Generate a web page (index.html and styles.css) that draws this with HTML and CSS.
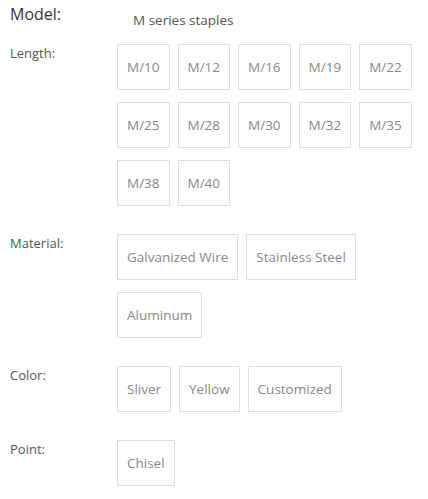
FILE: index.html
```html
<!DOCTYPE html>
<html lang="en">
<head>
<meta charset="utf-8">
<title>Product specs</title>
<link rel="stylesheet" href="styles.css">
</head>
<body>
<div class="specs">
  <div class="row row-model">
    <div class="label label-model">Model:</div>
    <div class="value-text">M series staples</div>
  </div>
  <div class="row">
    <div class="label">Length:</div>
    <div class="options">
      <span class="opt">M/10</span>
      <span class="opt">M/12</span>
      <span class="opt">M/16</span>
      <span class="opt">M/19</span>
      <span class="opt">M/22</span>
      <span class="opt">M/25</span>
      <span class="opt">M/28</span>
      <span class="opt">M/30</span>
      <span class="opt">M/32</span>
      <span class="opt">M/35</span>
      <span class="opt">M/38</span>
      <span class="opt">M/40</span>
    </div>
  </div>
  <div class="row">
    <div class="label">Material:</div>
    <div class="options">
      <span class="opt">Galvanized Wire</span>
      <span class="opt">Stainless Steel</span>
      <span class="opt">Aluminum</span>
    </div>
  </div>
  <div class="row">
    <div class="label">Color:</div>
    <div class="options">
      <span class="opt">Sliver</span>
      <span class="opt">Yellow</span>
      <span class="opt">Customized</span>
    </div>
  </div>
  <div class="row">
    <div class="label">Point:</div>
    <div class="options">
      <span class="opt">Chisel</span>
    </div>
  </div>
</div>
</body>
</html>
```

FILE: styles.css
```css
html, body {
  margin: 0;
  padding: 0;
  background: #ffffff;
}

body {
  font-family: "Open Sans", "Liberation Sans", sans-serif;
}

.specs {
  padding: 0 0 0 10px;
  width: 410px;
}

.row {
  display: grid;
  grid-template-columns: 107px 1fr;
  margin-bottom: 28px;
}

.row-model {
  padding-top: 3px;
  margin-bottom: 14px;
}

.label {
  font-size: 13px;
  line-height: 18px;
  color: #555555;
}

.label-model {
  font-size: 16px;
  line-height: 22px;
  color: #333333;
}

.value-text {
  font-size: 13.5px;
  line-height: 19px;
  padding-top: 8px;
  padding-left: 16px;
  color: #555555;
}

.options {
  display: flex;
  flex-wrap: wrap;
  gap: 12px 8px;
}

.opt {
  display: block;
  border: 1px solid #dddddd;
  padding: 0 9px;
  font-size: 13.5px;
  line-height: 44px;
  color: #888888;
  white-space: nowrap;
}
```
